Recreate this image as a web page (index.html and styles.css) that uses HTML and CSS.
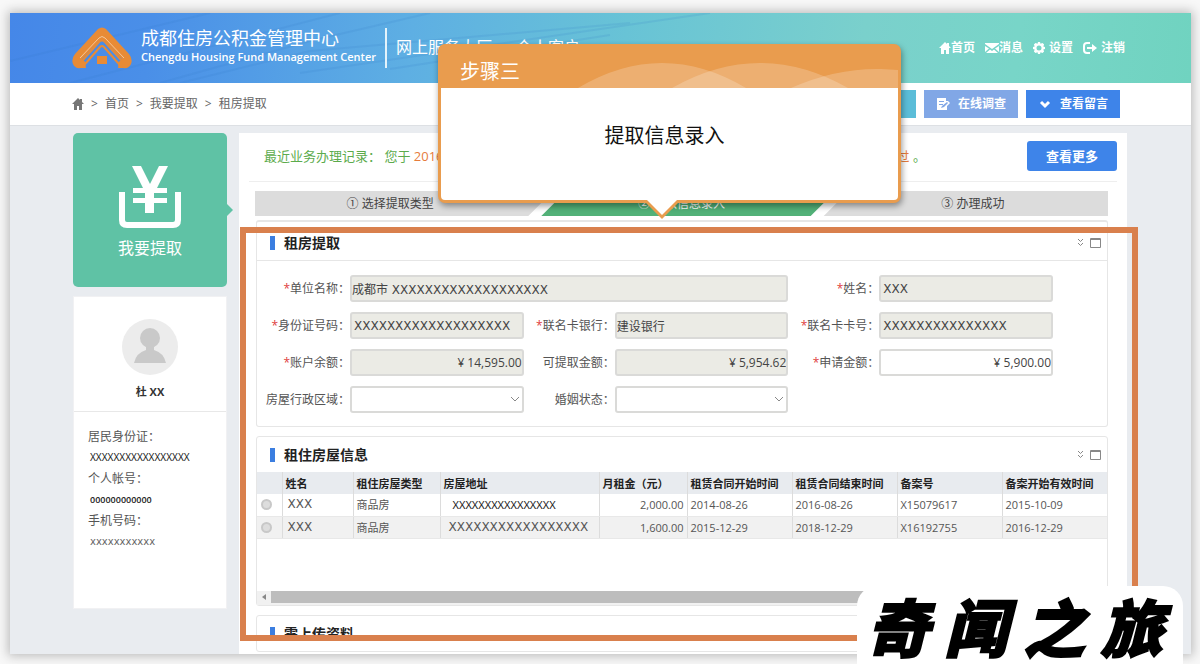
FILE: index.html
```html
<!DOCTYPE html>
<html lang="zh-CN">
<head>
<meta charset="utf-8">
<meta name="viewport" content="width=device-width, initial-scale=1">
<title>租房提取</title>
<link rel="stylesheet" href="styles.css">
</head>
<body>
<div class="app">
  <header class="header">
    <svg class="header-lines" viewBox="0 0 1181 70" preserveAspectRatio="none" aria-hidden="true">
      <path d="M0 48 L200 0 M60 70 L330 0 M150 70 L300 28 L420 0 M170 70 L300 38 L620 10 M290 60 L700 0 M380 56 L600 22"/>
    </svg>
    <svg class="logo" viewBox="0 0 60 42" aria-hidden="true">
      <path class="logo-fill" d="M26 2Q30 -1 34 2L57 27Q61 32 59 37Q57 42 51 41H46Q47 38 45 36L48 34Q51 33 49 31L34 15Q30 11 26 15L11 31Q9 33 12 34L15 36Q13 38 14 41H9Q3 42 1 37Q-1 32 3 27Z"/>
      <path class="logo-line" d="M10 34L27 15Q30 12 33 15L50 34M14 36L28 20Q30 18 32 20L46 36"/>
      <path class="logo-cut" d="M8 31L27 11Q30 8 33 11L52 31"/>
      <rect class="logo-fill" x="25" y="29" width="10" height="8"/>
    </svg>
    <div class="brand">
      <div class="brand-cn">成都住房公积金管理中心</div>
      <div class="brand-en">Chengdu Housing Fund Management Center</div>
    </div>
    <div class="portal"><span>网上服务大厅</span><span>个人客户</span></div>
    <nav class="top-nav" aria-label="账户">
      <a href="#home"><svg viewBox="0 0 12 12"><path d="M6 0L0 6H2V12H5V8H7V12H10V6H12L10 4V1H8V2Z"/></svg>首页</a>
      <a href="#message"><svg class="wide" viewBox="0 0 14 12"><path d="M0 2L7 7L14 2V1H0ZM0 4V10L4 6.5ZM14 4V10L10 6.5ZM5 7.5L1 11H13L9 7.5L7 9Z"/></svg>消息</a>
      <a href="#settings" class="spaced"><svg viewBox="0 0 12 12"><path fill-rule="evenodd" d="M5 0H7L7.500 1.700L9.500 .9L11.100 2.500L10.300 4.500L12 5V7L10.300 7.500L11.100 9.500L9.500 11.100L7.500 10.300L7 12H5L4.500 10.300L2.500 11.100L.9 9.500L1.700 7.500L0 7V5L1.700 4.500L.9 2.500L2.500 .9L4.500 1.700ZM6 3.500A2.500 2.500 0 1 0 6 8.500A2.500 2.500 0 1 0 6 3.500"/></svg>设置</a>
      <a href="#logout" class="spaced"><svg class="wide" viewBox="0 0 14 12"><path d="M7 1H4Q1 1 1 4V8Q1 11 4 11H7" fill="none" stroke="currentColor" stroke-width="2"/><path d="M4 5H9V2L14 6L9 10V7H4Z"/></svg>注销</a>
    </nav>
  </header>

  <div class="toolbar">
    <nav class="crumbs" aria-label="面包屑">
      <a href="#home" aria-label="首页"><svg viewBox="0 0 12 12"><path d="M6 0L0 6H2V12H5V8H7V12H10V6H12L10 4V1H8V2Z"/></svg></a>
      <span>&gt;</span><a href="#home">首页</a><span>&gt;</span><a href="#withdraw">我要提取</a><span>&gt;</span><a href="#rent">租房提取</a>
    </nav>
    <div class="actions">
      <button type="button" class="action action-teal">在线交流</button>
      <button type="button" class="action action-soft"><svg viewBox="0 0 14 14"><path fill-rule="evenodd" d="M1 1H10V4L12 4L14 6L11 9V13H1ZM3 4V5H8V4ZM3 7V8H7V7ZM5 11L6 9L11 5L12 6L8 10Z"/></svg>在线调查</button>
      <button type="button" class="action action-blue"><svg viewBox="0 0 14 14"><path d="M3 5L7 9L11 5" fill="none" stroke="currentColor" stroke-width="3"/></svg>查看留言</button>
    </div>
  </div>

  <div class="body">
    <aside class="sidebar">
      <a class="feature" href="#withdraw">
        <svg viewBox="0 0 62 62" aria-hidden="true">
          <path d="M3 26V54Q3 59 8 59H54Q59 59 59 54V26" fill="none" stroke="#fff" stroke-width="6"/>
          <path d="M13 0H22L31 18L40 0H49L38 22H48V27H35V32H48V37H35V47H26V37H14V32H26V27H14V22H24Z" fill="#fff"/>
        </svg>
        <span>我要提取</span>
      </a>
      <section class="profile">
        <div class="profile-head">
          <svg viewBox="0 0 56 56" aria-hidden="true"><circle cx="28" cy="28" r="28" fill="#ececec"/><circle cx="28" cy="19" r="10" fill="#c9c9c9"/><path d="M12 44Q14 34 24 31V27H32V31Q42 34 44 44Z" fill="#c9c9c9"/></svg>
          <strong>杜 XX</strong>
        </div>
        <dl class="profile-info">
          <dt>居民身份证：</dt><dd>XXXXXXXXXXXXXXXXX</dd>
          <dt>个人帐号：</dt><dd class="account">000000000000</dd>
          <dt>手机号码：</dt><dd class="phone">xxxxxxxxxxx</dd>
        </dl>
      </section>
    </aside>

    <main class="content">
      <div class="record">
        <p>最近业务办理记录： 您于 <em>2016-12-29</em></p>
        <p class="record-end"><em>审核通过</em> 。</p>
        <button type="button" class="more">查看更多</button>
      </div>
      <div class="steps">
        <div class="step step-first">① 选择提取类型</div>
        <div class="step-gap"><div class="step step-active">② 提取信息录入</div></div>
        <div class="step step-last">③ 办理成功</div>
      </div>

      <section class="panel">
        <div class="panel-head">
          <h2>租房提取</h2>
          <svg viewBox="0 0 26 12" aria-hidden="true"><path d="M2 2L4.500 4.500L7 2M2 6L4.500 8.500L7 6" /><path d="M14.500 1.500H24.500V10.500H14.500ZM14 2.500H25"/></svg>
        </div>
        <form class="form">
          <label for="unit"><i>*</i>单位名称：</label>
          <input id="unit" class="span-3" value="成都市 XXXXXXXXXXXXXXXXXXX" readonly>
          <label for="name"><i>*</i>姓名：</label>
          <input id="name" class="inset" value="XXX" readonly>
          <label for="idno"><i>*</i>身份证号码：</label>
          <input id="idno" class="inset" value="XXXXXXXXXXXXXXXXXXX" readonly>
          <label for="bank"><i>*</i>联名卡银行：</label>
          <input id="bank" value="建设银行" readonly>
          <label for="card"><i>*</i>联名卡卡号：</label>
          <input id="card" class="inset" value="XXXXXXXXXXXXXXX" readonly>
          <label for="balance"><i>*</i>账户余额：</label>
          <input id="balance" class="money" value="¥ 14,595.00" readonly>
          <label for="avail">可提取金额：</label>
          <input id="avail" class="money" value="¥ 5,954.62" readonly>
          <label for="apply"><i>*</i>申请金额：</label>
          <input id="apply" class="money" value="¥ 5,900.00">
          <label for="area">房屋行政区域：</label>
          <div class="select"><select id="area"><option></option></select><svg viewBox="0 0 10 6"><path d="M1 1L5 5L9 1"/></svg></div>
          <label for="marriage">婚姻状态：</label>
          <div class="select"><select id="marriage"><option></option></select><svg viewBox="0 0 10 6"><path d="M1 1L5 5L9 1"/></svg></div>
        </form>
      </section>

      <section class="panel">
        <div class="panel-head plain">
          <h2>租住房屋信息</h2>
          <svg viewBox="0 0 26 12" aria-hidden="true"><path d="M2 2L4.500 4.500L7 2M2 6L4.500 8.500L7 6" /><path d="M14.500 1.500H24.500V10.500H14.500ZM14 2.500H25"/></svg>
        </div>
        <div class="table-area">
          <table>
            <colgroup><col class="c-pick"><col class="c-name"><col class="c-type"><col class="c-addr"><col class="c-rent"><col class="c-date"><col class="c-date"><col class="c-date"><col class="c-date"></colgroup>
            <thead><tr><th></th><th>姓名</th><th>租住房屋类型</th><th>房屋地址</th><th>月租金（元）</th><th>租赁合同开始时间</th><th>租赁合同结束时间</th><th>备案号</th><th>备案开始有效时间</th></tr></thead>
            <tbody>
              <tr><td class="pick"><input type="radio" name="house" aria-label="选择 X15079617"></td><td class="wide-x">XXX</td><td>商品房</td><td class="addr">XXXXXXXXXXXXXXXX</td><td class="num">2,000.00</td><td>2014-08-26</td><td>2016-08-26</td><td>X15079617</td><td>2015-10-09</td></tr>
              <tr><td class="pick"><input type="radio" name="house" aria-label="选择 X16192755"></td><td class="wide-x">XXX</td><td>商品房</td><td class="wide-x addr-long">XXXXXXXXXXXXXXXXX</td><td class="num">1,600.00</td><td>2015-12-29</td><td>2018-12-29</td><td>X16192755</td><td>2016-12-29</td></tr>
            </tbody>
          </table>
        </div>
        <div class="scrollbar" aria-hidden="true"><svg viewBox="0 0 14 12"><path d="M9 3L5 6L9 9Z"/></svg><div class="thumb"></div></div>
      </section>

      <section class="panel">
        <div class="panel-head plain"><h2>需上传资料</h2></div>
      </section>
    </main>
  </div>
</div>

<div class="highlight"></div>

<div class="callout" role="dialog" aria-labelledby="step-title">
  <div class="callout-head">
    <svg viewBox="0 0 457 41" preserveAspectRatio="none" aria-hidden="true"><path d="M137 41Q221 -9 305 41Z"/><path d="M231 41Q319 -9 407 41Z"/><path d="M350 41Q395 21 440 22L457 23V41Z"/></svg>
    <h3 id="step-title">步骤三</h3>
  </div>
  <p>提取信息录入</p>
  <svg class="callout-tip" viewBox="0 0 36 20" aria-hidden="true"><path d="M0 0H36V1L18 19L0 1Z" fill="#e99c4e"/><path d="M3 0H33L18 15Z" fill="#fff"/></svg>
</div>

<div class="mark"><span>奇</span><span>闻</span><span>之</span><span>旅</span></div>
</body>
</html>
```

FILE: styles.css
```css
* { box-sizing: border-box; }

body {
  position: relative;
  min-height: 100vh;
  margin: 0;
  padding: 13px 9px 10px 10px;
  overflow: hidden;
  background: #f8f8f8;
  color: #555;
  font: 12px/20px "Open Sans", "Noto Sans CJK SC", sans-serif;
}

a { color: inherit; text-decoration: none; }
p, h2, h3, dl, dd { margin: 0; }
button { border: 0; padding: 0; color: #fff; font: inherit; font-weight: 600; }
svg { flex: none; }

.app { background: #e9ecf0; box-shadow: 0 0 10px 2px #bbb; }

/* header */
.header {
  position: relative;
  display: flex;
  align-items: center;
  height: 70px;
  padding: 0 66px 0 62px;
  background: linear-gradient(97deg, #4587e8 0%, #4a8fe8 12%, #5eafe3 34%, #68c3d6 52%, #7ad0cc 72%, #78d5c8 85%, #70d3c0 100%);
  color: #fff;
}
.header-lines { position: absolute; inset: 0; width: 100%; height: 100%; fill: none; stroke: #2f78c8; stroke-opacity: .14; stroke-width: 2; }
.logo { position: relative; width: 60px; height: 42px; }
.logo-fill { fill: #e88b36; }
.logo-line { fill: none; stroke: #e88b36; stroke-width: 2; }
.logo-cut { fill: none; stroke: #f4c79a; stroke-width: 1; }
.brand { position: relative; margin-left: 9px; padding: 0 9px 4px 0; white-space: nowrap; }
.brand-cn { font-size: 18px; line-height: 22px; }
.brand-en { font-size: 11px; line-height: 16px; font-weight: 600; }
.portal { position: relative; display: flex; gap: 24px; align-items: center; height: 40px; padding: 0 0 2px 9px; border-left: 2px solid #e3f3fb; font-size: 16px; white-space: nowrap; }
.top-nav { position: relative; display: flex; gap: 10px; margin-left: auto; font-weight: 600; white-space: nowrap; }
.top-nav a { display: flex; align-items: center; }
.top-nav .spaced { gap: 4px; }
.top-nav svg { width: 12px; height: 12px; fill: currentColor; }
.top-nav .wide { width: 14px; }

/* breadcrumb and actions */
.toolbar { display: flex; align-items: center; justify-content: space-between; height: 43px; padding: 0 71px 0 62px; background: #fff; border-bottom: 1px solid #dde0e4; }
.crumbs { display: flex; align-items: center; gap: 7px; color: #666; }
.crumbs svg { display: block; width: 12px; height: 12px; fill: #777; }
.actions { display: flex; gap: 8px; }
.action { display: flex; align-items: center; justify-content: center; gap: 8px; width: 94px; height: 28px; }
.action svg { width: 14px; height: 14px; fill: currentColor; }
.action-teal { background: #5bbdd8; }
.action-soft { background: #81a7e6; }
.action-blue { background: #3e84e9; }

/* columns */
.body { display: flex; gap: 12px; align-items: flex-start; padding: 7px 64px 0 63px; }
.sidebar { flex: none; width: 154px; }
.feature { position: relative; display: flex; flex-direction: column; align-items: center; gap: 8px; height: 154px; padding-top: 33px; border-radius: 5px; background: #5fc2a5; color: #fff; font-size: 16px; line-height: 24px; }
.feature::after { content: ""; position: absolute; left: 100%; top: 71px; border: 6px solid transparent; border-left-color: #5fc2a5; border-right: 0; }
.feature svg { width: 62px; height: 62px; }
.profile { height: 313px; margin: 9px 0 0; border: 1px solid #f1f1f3; background: #fff; }
.profile-head { display: flex; flex-direction: column; align-items: center; gap: 7px; height: 115px; padding-top: 22px; border-bottom: 1px solid #e8e8e8; }
.profile-head svg { width: 56px; height: 56px; }
.profile-head strong { font-size: 11px; line-height: 20px; color: #333; }
.profile-info { padding: 14px 0 0 14px; line-height: 21px; }
.profile-info dd { padding-left: 2px; color: #222; font-family: "Noto Sans", sans-serif; font-size: 10px; line-height: 21px; }
.profile-info .account { font-family: "Open Sans", sans-serif; font-size: 9px; font-weight: 600; }
.profile-info .phone { font-family: "DejaVu Sans", sans-serif; color: #666; }

.content { flex: 1; min-width: 0; padding: 0 19px 2px 16px; background: #fff; }
.record { display: flex; align-items: center; height: 49px; margin: 0 -9px 0 -6px; padding: 0 0 2px 15px; border-bottom: 1px solid #eee; color: #5cab4c; font-size: 13px; white-space: nowrap; }
.record em { color: #e67c3c; font-style: normal; }
.record-end { margin-left: auto; }
.more { width: 90px; height: 30px; margin-left: 101px; border-radius: 3px; background: #3e84e9; }

/* steps */
.steps { display: grid; grid-template-columns: repeat(3, 1fr); margin-top: 9px; background: #dcdcdc; text-align: center; }
.step { line-height: 25px; color: #444; }
.step-first { padding-right: 14px; }
.step-last { padding-left: 14px; }
.step-gap { margin: 0 -25px 0 -11px; padding: 0 13px; background: #fff; clip-path: polygon(25px 0, 100% 0, calc(100% - 25px) 100%, 0 100%); }
.step-active { padding-right: 14px; background: #52b178; color: #fff; clip-path: polygon(25px 0, 100% 0, calc(100% - 25px) 100%, 0 100%); }

/* panels */
.panel { margin: 9px 0 0 1px; border: 1px solid #e6e6e6; border-radius: 3px; background: #fff; }
.steps + .panel { margin-top: 4px; border-top-width: 2px; }
.panel-head { display: flex; align-items: center; justify-content: space-between; height: 39px; padding: 4px 5px 0 13px; border-bottom: 1px solid #e6e6e6; }
.panel-head.plain { height: 35px; padding-top: 0; border: 0; }
.panel-head h2 { padding-left: 9px; border-left: 5px solid #3b7ee0; color: #222; font-size: 14px; line-height: 14px; font-weight: 700; }
.panel-head svg { width: 26px; height: 12px; fill: none; stroke: #888; }

.form { display: grid; grid-template-columns: 93px 1fr 91px 1fr 91px 1fr; grid-auto-rows: 27px; row-gap: 10px; padding: 14px 54px 13px 0; }
.form label { line-height: 27px; text-align: right; white-space: nowrap; }
.form i { color: #e04040; font-style: normal; }
.form input, .form select { width: 100%; min-width: 0; height: 27px; padding: 0; border: 2px solid #dadad8; border-radius: 3px; background: #fff; color: #444; font: 12px "DejaVu Sans", "Noto Sans CJK SC", sans-serif; }
.form input:read-only { background: #ebebe5; }
.form .inset { padding-left: 2px; }
.form .money { text-align: right; font-family: "Open Sans", sans-serif; }
.form .span-3 { grid-column: span 3; }
.form .select { position: relative; }
.form select { -webkit-appearance: none; appearance: none; }
.select svg { position: absolute; right: 4px; top: 10px; width: 10px; height: 6px; fill: none; stroke: #888; pointer-events: none; }

/* table */
.table-area { min-height: 119px; }
table { width: 100%; table-layout: fixed; border-collapse: collapse; font-size: 11px; line-height: 21px; }
.c-pick { width: 25px; } .c-name { width: 71px; } .c-type { width: 87px; } .c-addr { width: 159px; } .c-rent { width: 88px; }
th, td { height: 22px; padding: 0 0 0 3px; border-right: 1px solid #dcdcdc; text-align: left; vertical-align: middle; white-space: nowrap; }
th { background: #e8ebef; color: #222; font-weight: 700; }
th:last-child, td:last-child { border-right: 0; }
td { border-bottom: 1px solid #e8e8e8; }
tbody tr:nth-child(2) { background: #f1f1f1; }
td.pick { padding: 0 0 0 4px; }
.pick input { display: block; appearance: none; width: 11px; height: 11px; margin: 0; border: 2px solid #c8c8c8; border-radius: 50%; background: #ddd; }
td.wide-x { padding-left: 5px; font-family: "DejaVu Sans", sans-serif; font-size: 12px; }
td.addr { padding-left: 12px; color: #222; font-family: "Noto Sans", sans-serif; }
td.addr-long { padding-left: 8px; }
td.num { padding: 0 3px; text-align: right; }
.scrollbar { display: flex; height: 14px; padding-bottom: 2px; background: #f1f1f1; }
.scrollbar svg { width: 14px; height: 12px; fill: #888; }
.thumb { flex: 1; background: #bdbdbd; }

/* overlays */
.highlight { position: absolute; left: 240px; right: 62px; top: 227px; height: 414px; border: 6px solid #d9804d; }
.callout { position: absolute; left: 438px; top: 44px; width: 463px; height: 159px; border: 3px solid #e99c4e; border-radius: 7px; background: #fff; box-shadow: 1px 3px 6px #0006; color: #111; text-align: center; }
.callout-head { position: relative; height: 41px; background: #e99c4e; color: #fff; text-align: left; }
.callout-head svg { position: absolute; inset: 0; width: 100%; height: 100%; fill: #fff; fill-opacity: .2; }
.callout h3 { position: relative; padding-left: 19px; font-size: 20px; line-height: 50px; font-weight: 400; }
.callout p { padding-right: 10px; font-size: 20px; line-height: 96px; }
.callout-tip { position: absolute; left: 203px; top: 153px; width: 36px; height: 20px; }
.mark { position: absolute; right: 17px; bottom: 0; display: flex; gap: 16px; padding: 0 20px 0 10px; border-radius: 20px 20px 0 0; background: #fff; color: #000; font: italic 900 62px/78px "Noto Sans CJK SC", sans-serif; -webkit-text-stroke: 2px #000; }
```
